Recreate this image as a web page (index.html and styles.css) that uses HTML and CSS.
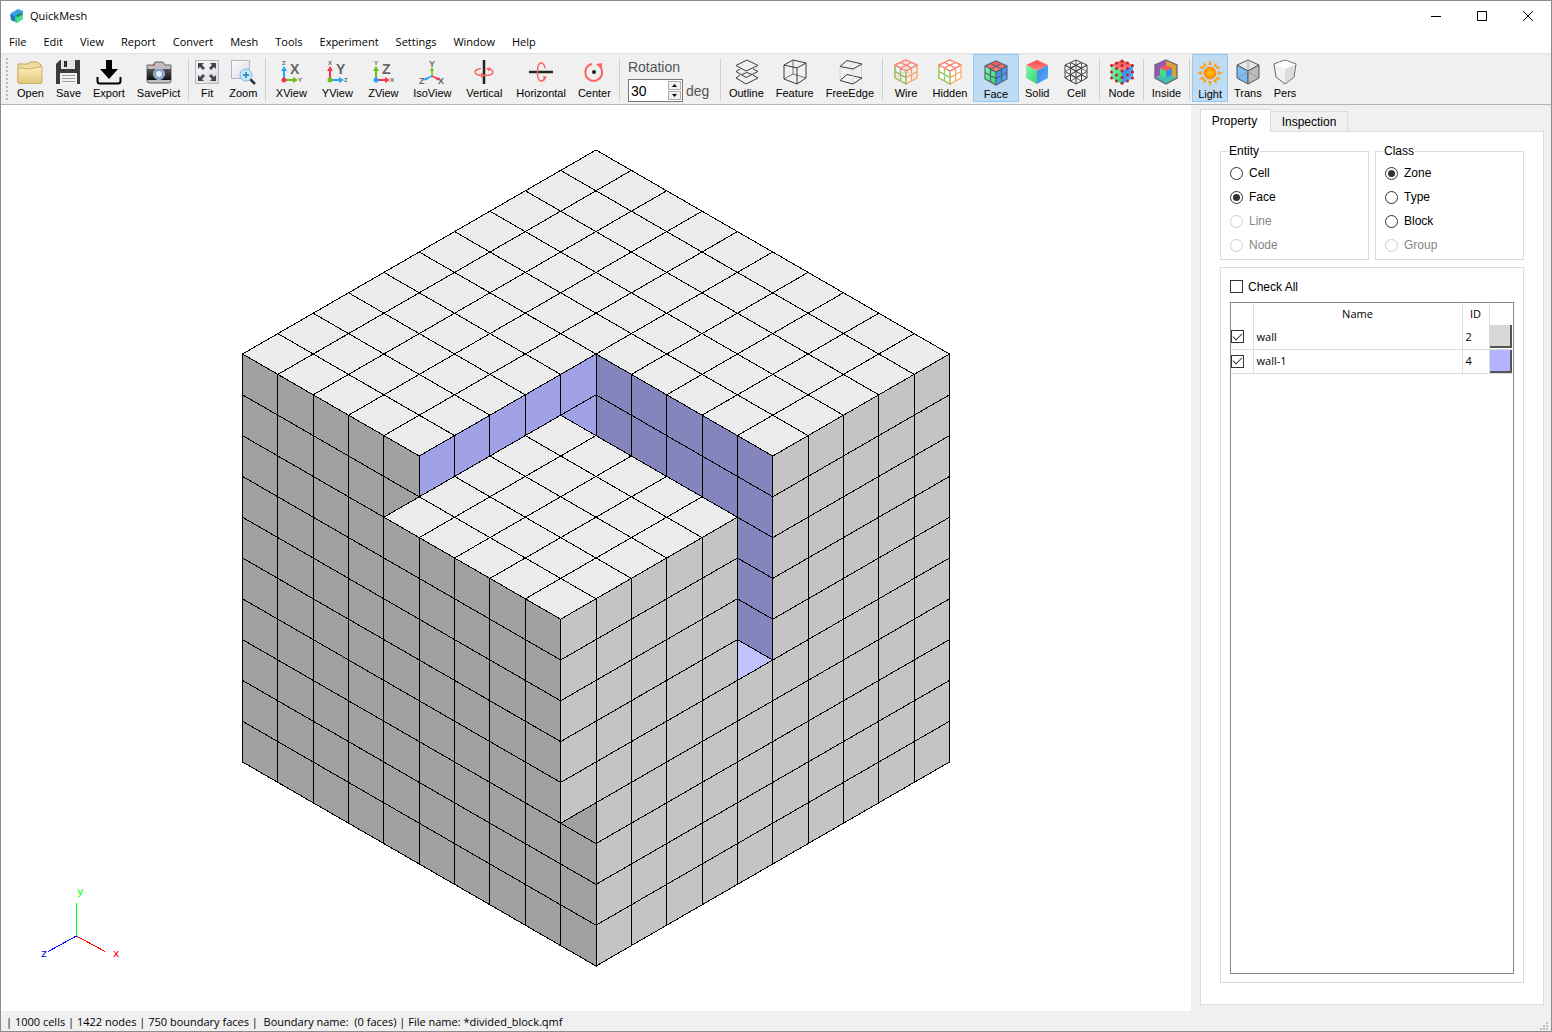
FILE: index.html
```html
<!DOCTYPE html>
<html lang="en">
<head>
<meta charset="utf-8">
<title>QuickMesh</title>
<link rel="stylesheet" href="styles.css">
</head>
<body>
<svg class="defs" width="0" height="0" aria-hidden="true">
  <defs>
    <linearGradient id="folder" x1="0" y1="0" x2="0" y2="1"><stop offset="0" stop-color="#fdf0bd"/><stop offset="1" stop-color="#e3c77c"/></linearGradient>
    <linearGradient id="glass" x1="0" y1="0" x2="1" y2="1"><stop offset="0" stop-color="#fdfdfe"/><stop offset="1" stop-color="#d3d9e4"/></linearGradient>
    <linearGradient id="redtop" x1="0" y1="0" x2="0" y2="1"><stop offset="0" stop-color="#ff4a4a"/><stop offset="1" stop-color="#fb8a85"/></linearGradient>
    <linearGradient id="greenside" x1="0" y1="0" x2="1" y2="1"><stop offset="0" stop-color="#8af5ae"/><stop offset="1" stop-color="#2ed36e"/></linearGradient>
    <linearGradient id="blueside" x1="0" y1="0" x2="1" y2="1"><stop offset="0" stop-color="#2f80e6"/><stop offset="1" stop-color="#62b2ff"/></linearGradient>
    <linearGradient id="lens" x1="0" y1="0" x2="0" y2="1"><stop offset="0" stop-color="#555"/><stop offset="1" stop-color="#111"/></linearGradient>
    <radialGradient id="sun"><stop offset="0" stop-color="#ffc400"/><stop offset="1" stop-color="#ff8a00"/></radialGradient>
    <g id="solidcube">
      <path d="M13 1L24 6 13 12 2 6Z" fill="url(#redtop)"/>
      <path d="M2 6L13 12V25L2 19Z" fill="url(#greenside)"/>
      <path d="M24 6L13 12V25L24 19Z" fill="url(#blueside)"/>
    </g>
    <path id="cubegrid" d="M13 1L24 6V19L13 25 2 19V6ZM2 6L13 12 24 6M13 12V25M7.500 3.500L18.500 9V22M18.500 3.500L7.500 9V22M2 12.500L13 18.500 24 12.500"/>
    <!-- five by five patch of mesh faces in unit coordinates -->
    <path id="patch" d="M0 0H5V5H0ZM1 0V5M2 0V5M3 0V5M4 0V5M0 1H5M0 2H5M0 3H5M0 4H5" vector-effect="non-scaling-stroke"/>
  </defs>
</svg>

<div class="window">
  <header class="titlebar">
    <svg class="logo" viewBox="0 0 16 16"><path d="M2 5L9 1 14 3 14 7 7 9 2 11Z" fill="#3fa0ea"/><path d="M1 6L6 8V14L2 12Z" fill="#2378bd"/><path d="M6 8L14 5V11L8 15 6 14Z" fill="#35d079"/><path d="M6 8L10 5 14 5.500 10 9Z" fill="#258b6e"/><path d="M8 10L14 7V11L8 15Z" fill="#52e392"/></svg>
    <h1>QuickMesh</h1>
    <div class="winbuttons">
      <button aria-label="Minimize"><svg viewBox="0 0 12 12"><path d="M1 6.500H11"/></svg></button>
      <button aria-label="Maximize"><svg viewBox="0 0 12 12"><path d="M1.500 1.500H10.500V10.500H1.500Z"/></svg></button>
      <button aria-label="Close"><svg viewBox="0 0 12 12"><path d="M1 1L11 11M11 1L1 11"/></svg></button>
    </div>
  </header>

  <nav class="menubar">
    <button>File</button><button>Edit</button><button>View</button><button>Report</button><button>Convert</button><button>Mesh</button><button>Tools</button><button>Experiment</button><button>Settings</button><button>Window</button><button>Help</button>
  </nav>

  <div class="toolbar" role="toolbar">
    <span class="grip"></span>
    <button class="tool"><svg viewBox="0 0 26 26"><path d="M1 5H11L13 3H20L24 6V23H1Z" fill="#f1dc9c" stroke="#bfa366"/><path d="M1 23V10L4 9 12 10 25 7.500V23Q25 24.500 23 24.500H3Q1 24.500 1 23Z" fill="url(#folder)" stroke="#c9ae6c"/></svg><span>Open</span></button>
    <button class="tool"><svg viewBox="0 0 26 26"><path d="M1 5L5 1H25V25H1Z" fill="#3b3b3b"/><path d="M6 1H20V10H6Z" fill="#e4e4e4"/><path d="M9 2H12V8H9Z" fill="#333"/><path d="M5 14H22V25H5Z" fill="#f2f2f2"/><path d="M7 16.500H20M7 19.500H20M7 22.500H20" stroke="#999"/></svg><span>Save</span></button>
    <button class="tool"><svg viewBox="0 0 26 26"><path d="M10 1H16V10H22L13 20 4 10H10Z" fill="#000"/><path d="M1.500 18V22Q1.500 24.500 4 24.500H22Q24.500 24.500 24.500 22V18" fill="none" stroke="#000" stroke-width="2"/></svg><span>Export</span></button>
    <button class="tool"><svg viewBox="0 0 26 26"><path d="M1 6H7L9 3H17L19 6H25V22Q25 24 23 24H3Q1 24 1 22Z" fill="#bdbdbd" stroke="#666"/><path d="M1 10H25V21H1Z" fill="url(#lens)"/><circle cx="13" cy="15" r="5.500" fill="#7f9fd0" stroke="#bbb"/><circle cx="13" cy="15" r="3" fill="#e1f0ff"/><circle cx="8" cy="6" r="1" fill="#f33"/></svg><span>SavePict</span></button>
    <span class="sep"></span>
    <button class="tool"><svg viewBox="0 0 26 26"><path d="M1.500 1.500H24.500V24.500H1.500Z" fill="url(#glass)" stroke="#b5b5b5"/><path d="M4 4H10L8 6 11 9 9 11 6 8 4 10ZM22 4H16L18 6 15 9 17 11 20 8 22 10ZM4 22H10L8 20 11 17 9 15 6 18 4 16ZM22 22H16L18 20 15 17 17 15 20 18 22 16Z" fill="#444"/></svg><span>Fit</span></button>
    <button class="tool"><svg viewBox="0 0 26 26"><path d="M1.500 1.500H19.500V19.500H1.500Z" fill="url(#glass)" stroke="#b5b5b5"/><path d="M20 20L25 25" stroke="#333" stroke-width="2.500"/><circle cx="16" cy="16" r="6" fill="#c4e6fb" stroke="#7cb9e6"/><path d="M13 16H19M16 13V19" stroke="#3579ad" stroke-width="1.500"/></svg><span>Zoom</span></button>
    <span class="sep"></span>
    <button class="tool axis"><svg viewBox="0 0 26 26"><path d="M6 21V10" stroke="#23a6f5" stroke-width="2"/><path d="M6 7L3 12H9Z" fill="#23a6f5"/><path d="M6 21H16" stroke="#6abf1c" stroke-width="2"/><path d="M20 21L15 18V24Z" fill="#6abf1c"/><circle cx="6" cy="21" r="2.500" fill="#f4364c"/><text x="4" y="6" class="s">Z</text><text x="20" y="23" class="s">Y</text><text x="12" y="15" class="l">X</text></svg><span>XView</span></button>
    <button class="tool axis"><svg viewBox="0 0 26 26"><path d="M6 21V10" stroke="#f4364c" stroke-width="2"/><path d="M6 7L3 12H9Z" fill="#f4364c"/><path d="M6 21H16" stroke="#23a6f5" stroke-width="2"/><path d="M20 21L15 18V24Z" fill="#23a6f5"/><circle cx="6" cy="21" r="2.500" fill="#6abf1c"/><text x="4" y="6" class="s">X</text><text x="20" y="23" class="s">Z</text><text x="12" y="15" class="l">Y</text></svg><span>YView</span></button>
    <button class="tool axis"><svg viewBox="0 0 26 26"><path d="M6 21V10" stroke="#6abf1c" stroke-width="2"/><path d="M6 7L3 12H9Z" fill="#6abf1c"/><path d="M6 21H16" stroke="#f4364c" stroke-width="2"/><path d="M20 21L15 18V24Z" fill="#f4364c"/><circle cx="6" cy="21" r="2.500" fill="#23a6f5"/><text x="4" y="6" class="s">Y</text><text x="20" y="23" class="s">X</text><text x="12" y="15" class="l">Z</text></svg><span>ZView</span></button>
    <button class="tool axis w52"><svg viewBox="0 0 26 26"><path d="M13 17V10" stroke="#6abf1c" stroke-width="1.500"/><path d="M13 8L11 12H15Z" fill="#6abf1c"/><path d="M13 17L7 20" stroke="#23a6f5" stroke-width="1.500"/><path d="M4 21.500L7 18 9 21Z" fill="#23a6f5"/><path d="M13 17L19 20" stroke="#f4364c" stroke-width="1.500"/><path d="M22 21.500L19 18 17 21Z" fill="#f4364c"/><text x="10" y="8" class="m">Y</text><text x="0" y="25" class="m">Z</text><text x="19" y="25" class="m">X</text></svg><span>IsoView</span></button>
    <button class="tool w52"><svg viewBox="0 0 26 26"><path d="M13 1V25" stroke="#222" stroke-width="2.500"/><path d="M10 9.500Q4 10.500 4 13Q4 16.500 13 16.500Q22 16.500 22 13Q22 11 17 9.500" fill="none" stroke="#fa6464" stroke-width="1.500"/><path d="M15 9L20 8.500 18 12.500ZM10 13.500L14 16.500 10 19Z" fill="#fa6464"/></svg><span>Vertical</span></button>
    <button class="tool"><svg viewBox="0 0 26 26"><path d="M1 13H25" stroke="#222" stroke-width="2.500"/><path d="M17 9Q16 4 13 4Q9.500 4 9.500 13Q9.500 22 13 22Q16 22 17 18" fill="none" stroke="#fa6464" stroke-width="1.500"/><path d="M15 17L19 17.500 16 22Z" fill="#fa6464"/></svg><span>Horizontal</span></button>
    <button class="tool"><svg viewBox="0 0 26 26"><circle cx="13" cy="13" r="2" fill="#222"/><path d="M11 5A8.500 8.500 0 1 0 20 9" fill="none" stroke="#fa6464" stroke-width="2"/><path d="M15 5L21 4 21 11Z" fill="#fa6464"/></svg><span>Center</span></button>
    <span class="sep"></span>
    <div class="rotation">
      <label for="angle">Rotation</label>
      <div class="angle">
        <div class="spin"><input id="angle" type="text" value="30"><div class="arrows"><button aria-label="Increase"><svg viewBox="0 0 7 4"><path d="M3.500 0L7 4H0Z"/></svg></button><button aria-label="Decrease"><svg viewBox="0 0 7 4"><path d="M0 0H7L3.500 4Z"/></svg></button></div></div>
        <span>deg</span>
      </div>
    </div>
    <span class="sep"></span>
    <button class="tool"><svg viewBox="0 0 26 26" fill="none" stroke="#3c3c3c"><path d="M14 1L25 6.500 13 12 3 6.500ZM7 10L3 12.500 13 18.500 25 12.500 20 10M7 16L3 19 13 25 25 19 20 16M9 15.500L14 13.500 19 15.500"/></svg><span>Outline</span></button>
    <button class="tool"><svg viewBox="0 0 26 26" fill="none" stroke="#3c3c3c"><path d="M11 1L24 4V19L15 25 2 20V6ZM2 6L15 9 24 4M15 9V25"/><path d="M11 1V15L2 20M11 15L24 19" stroke-width="0.700"/></svg><span>Feature</span></button>
    <button class="tool"><svg viewBox="0 0 26 26" fill="none" stroke="#3c3c3c"><path d="M10 1.500L25 5 16 10 3 7.500ZM10 15.500L25 19 16 25 3 21.500Z"/><path d="M24.500 6V18M3 8V21M16 11V24" stroke="#d4d4d4"/></svg><span>FreeEdge</span></button>
    <span class="sep"></span>
    <button class="tool w42"><svg viewBox="0 0 26 26" fill="none"><use href="#cubegrid" stroke="#f5a05c" stroke-width="1.200"/><path d="M2 6V19L13 25V12M7.500 9V22M2 12.500L13 18.500" stroke="#8bc66a" stroke-width="1.200"/><path d="M2 6L13 1 24 6 13 12ZM7.500 3.500L18.500 9M18.500 3.500L7.500 9" stroke="#fa7f7f" stroke-width="1.200"/><path d="M13 1V12M2 19L13 12 24 19" stroke="#e9b394" stroke-width="0.700"/></svg><span>Wire</span></button>
    <button class="tool w46"><svg viewBox="0 0 26 26" fill="none"><path d="M13 1L24 6V19L13 25 2 19V6Z" fill="#fff"/><use href="#cubegrid" stroke="#f8a75c" stroke-width="1.200"/><path d="M2 6V19L13 25V12M7.500 9V22M2 12.500L13 18.500" stroke="#8bd066" stroke-width="1.200"/><path d="M2 6L13 1 24 6 13 12ZM7.500 3.500L18.500 9M18.500 3.500L7.500 9" stroke="#fa7f7f" stroke-width="1.200"/></svg><span>Hidden</span></button>
    <button class="tool w46 on"><svg viewBox="0 0 26 26" fill="none"><use href="#solidcube"/><use href="#cubegrid" stroke="#566573" stroke-width="1.200"/></svg><span>Face</span></button>
    <button class="tool"><svg viewBox="0 0 26 26"><use href="#solidcube"/></svg><span>Solid</span></button>
    <button class="tool w42"><svg viewBox="0 0 26 26" fill="none" stroke="#444"><use href="#cubegrid"/><path d="M13 1V12M2 19L13 12 24 19M7.500 3.500V16L18.500 22M18.500 3.500V16L7.500 22M2 12.500L13 6.500 24 12.500M7.500 9L13 6.500M2 6L24 19M24 6L2 19" stroke-width="0.800"/></svg><span>Cell</span></button>
    <span class="sep"></span>
    <button class="tool"><svg viewBox="0 0 26 26"><use href="#solidcube"/><g fill="#b7262b"><circle cx="13" cy="2" r="1.500"/><circle cx="7.500" cy="4" r="1.500"/><circle cx="18.500" cy="4" r="1.500"/><circle cx="2.500" cy="6.500" r="1.500"/><circle cx="13" cy="6.500" r="1.500"/><circle cx="23.500" cy="6.500" r="1.500"/><circle cx="7.500" cy="9.500" r="1.500"/><circle cx="18.500" cy="9.500" r="1.500"/><circle cx="13" cy="12" r="1.500"/><circle cx="2.500" cy="13" r="1.500"/><circle cx="23.500" cy="13" r="1.500"/><circle cx="7.500" cy="16" r="1.500"/><circle cx="18.500" cy="16" r="1.500"/><circle cx="13" cy="18.500" r="1.500"/><circle cx="2.500" cy="19" r="1.500"/><circle cx="23.500" cy="19" r="1.500"/><circle cx="7.500" cy="22" r="1.500"/><circle cx="18.500" cy="22" r="1.500"/><circle cx="13" cy="24.300" r="1.500"/></g></svg><span>Node</span></button>
    <span class="sep"></span>
    <button class="tool"><svg viewBox="0 0 26 26"><path d="M2 6L13 1V13L2 19Z" fill="#9a55b5"/><path d="M13 1L24 6V19L13 13Z" fill="#d9a52c"/><path d="M2 19L13 13 24 19 13 25Z" fill="#47bba8"/><path d="M13 1L24 6V19L13 25 2 19V6Z" fill="none" stroke="#6b6578" stroke-width="1.300"/><path d="M13 6L19 9 13 12 7 9Z" fill="#fb5757"/><path d="M7 9L13 12V19L7 16Z" fill="#41e083"/><path d="M19 9L13 12V19L19 16Z" fill="#388bed"/></svg><span>Inside</span></button>
    <span class="sep"></span>
    <button class="tool on"><svg viewBox="0 0 26 26"><path d="M13 0L15 5H11ZM13 26L15 21H11ZM0 13L5 11V15ZM26 13L21 11V15ZM6.500 2L10 6 6.500 8ZM19.500 2L19.500 8 16 6ZM2 6.500L8 6.500 6 10ZM24 6.500L20 10 18 6.500ZM2 19.500L6 16 8 19.500ZM24 19.500L18 19.500 20 16ZM6.500 24L6.500 18 10 20ZM19.500 24L16 20 19.500 18Z" fill="#ff9d13"/><circle cx="13" cy="13" r="8" fill="#c0dcf3"/><circle cx="13" cy="13" r="6" fill="url(#sun)" stroke="#ff8b08"/></svg><span>Light</span></button>
    <button class="tool"><svg viewBox="0 0 26 26" stroke="#555"><path d="M2 6L13 1 24 6 13 12Z" fill="#e6e6e6"/><path d="M2 6L13 12V25L2 19Z" fill="#7cbdf5"/><path d="M24 6L13 12V25L24 19Z" fill="#bcbcbc"/><path d="M13 1V13L2 19M13 13L24 19" stroke="#8c8c8c" stroke-width="0.700" fill="none"/></svg><span>Trans</span></button>
    <button class="tool"><svg viewBox="0 0 26 26"><path d="M13 1L24 5 22 18 13 25 4 18 2 5Z" fill="#f2f2f2" stroke="#666"/><path d="M2.500 5.500L13 10 23.500 5.500 13 1.500Z" fill="#fff"/><path d="M13 10L23 6 21.500 17.500 13 24Z" fill="#dcdcdc"/></svg><span>Pers</span></button>
  </div>

  <main class="work">
    <section class="view" aria-label="Mesh view">
      <svg class="mesh" viewBox="-595 -453 1190 906" stroke="#000" stroke-width="1" shape-rendering="crispEdges">
        <!-- outer block -->
        <g fill="#ececec" transform="matrix(35.350 20.400 -35.350 20.400 0 -408)"><use href="#patch"/><use href="#patch" x="5"/><use href="#patch" y="5"/></g>
        <g fill="#a1a1a1" transform="matrix(35.350 20.400 0 40.800 -353.500 -204)"><use href="#patch"/><use href="#patch" y="5"/><use href="#patch" x="5" y="5"/></g>
        <g fill="#c4c4c4" transform="matrix(-35.350 20.400 0 40.800 353.500 -204)"><use href="#patch"/><use href="#patch" y="5"/><use href="#patch" x="5" y="5"/></g>
        <!-- pocket left by the divided block -->
        <g fill="#c1c1ff" transform="matrix(35.350 20.400 -35.350 20.400 0 0)"><use href="#patch"/></g>
        <g fill="#a1a1e5" transform="matrix(-35.350 20.400 0 40.800 0 -204)"><use href="#patch"/></g>
        <g fill="#8585bd" transform="matrix(35.350 20.400 0 40.800 0 -204)"><use href="#patch"/></g>
        <!-- divided block -->
        <g fill="#ececec" transform="matrix(35.350 20.400 -35.350 20.400 -35.350 -142.800)"><use href="#patch"/></g>
        <g fill="#a1a1a1" transform="matrix(35.350 20.400 0 40.800 -212.100 -40.800)"><use href="#patch"/></g>
        <g fill="#c4c4c4" transform="matrix(-35.350 20.400 0 40.800 141.400 -40.800)"><use href="#patch"/></g>
      </svg>
      <svg class="triad" viewBox="36 880 90 80" shape-rendering="crispEdges">
        <path d="M76.500 936V903" stroke="#0f0"/><path d="M76.500 936L105 951.500" stroke="#f00"/><path d="M76.500 936L48 951.500" stroke="#00f"/>
        <text x="77" y="895" fill="#0f0">y</text><text x="41" y="957" fill="#00f">z</text><text x="113" y="957" fill="#f00">x</text>
      </svg>
    </section>

    <aside class="side">
      <div class="tabs" role="tablist"><button class="tab current" role="tab" aria-selected="true">Property</button><button class="tab" role="tab">Inspection</button></div>
      <div class="pane">
        <div class="groups">
          <fieldset><legend>Entity</legend>
            <label><input type="radio" name="entity">Cell</label>
            <label><input type="radio" name="entity" checked>Face</label>
            <label><input type="radio" name="entity" disabled>Line</label>
            <label><input type="radio" name="entity" disabled>Node</label>
          </fieldset>
          <fieldset><legend>Class</legend>
            <label><input type="radio" name="class" checked>Zone</label>
            <label><input type="radio" name="class">Type</label>
            <label><input type="radio" name="class">Block</label>
            <label><input type="radio" name="class" disabled>Group</label>
          </fieldset>
        </div>
        <div class="list">
          <label class="all"><input type="checkbox">Check All</label>
          <div class="tablebox">
            <table>
              <thead><tr><th class="c1"></th><th>Name</th><th class="c3">ID</th><th class="c4"></th></tr></thead>
              <tbody>
                <tr><td><input type="checkbox" aria-label="wall" checked></td><td>wall</td><td>2</td><td><button class="swatch grey" aria-label="Colour of wall"></button></td></tr>
                <tr><td><input type="checkbox" aria-label="wall-1" checked></td><td>wall-1</td><td>4</td><td><button class="swatch blue" aria-label="Colour of wall-1"></button></td></tr>
              </tbody>
            </table>
          </div>
        </div>
      </div>
    </aside>
  </main>

  <footer class="status"><span>| 1000 cells | 1422 nodes | 750 boundary faces |&nbsp; Boundary name:&nbsp; (0 faces) | File name: *divided_block.qmf</span>
    <svg viewBox="0 0 8 8"><path d="M6 0H8V2H6ZM3 3H5V5H3ZM6 3H8V5H6ZM0 6H2V8H0ZM3 6H5V8H3ZM6 6H8V8H6Z"/></svg></footer>
</div>
</body>
</html>
```
FILE: styles.css
```css
* { box-sizing: border-box; }
body { margin: 0; font: 12px/16px "Liberation Sans", Arial, sans-serif; color: #000; }
button { margin: 0; padding: 0; border: 0; background: none; font: inherit; color: inherit; }
svg { display: block; }
.defs { position: absolute; }

.window { display: flex; flex-direction: column; height: 100vh; border: 1px solid #8c8c8c; background: #f0f0f0; }

.titlebar { display: flex; align-items: center; height: 29px; padding-left: 8px; background: #fff; font-family: "Open Sans", "Noto Sans", sans-serif; }
.titlebar h1 { margin: 0; font-size: 11px; font-weight: 400; }
.logo { width: 16px; height: 16px; margin-right: 5px; }
.winbuttons { display: flex; margin-left: auto; }
.winbuttons button { display: grid; place-items: center; width: 46px; height: 29px; }
.winbuttons svg { width: 12px; height: 12px; fill: none; stroke: #000; }

.menubar { display: flex; gap: 1px; height: 23px; background: #fff; font-family: "Open Sans", "Noto Sans", sans-serif; font-size: 11px; }
.menubar button { padding: 0 8px; }

.toolbar { display: flex; align-items: flex-start; height: 52px; padding: 0 0 0 5px; border-top: 1px solid #e0e0e0; border-bottom: 1px solid #b4b4b4; }
.grip { width: 2px; height: 42px; margin: 4px 3px 0 0; background: repeating-linear-gradient(#b8b8b8 0 2px, transparent 2px 4px); }
.tool { flex: none; display: flex; flex-direction: column; align-items: center; min-width: 32px; height: 48px; padding: 4px 5px 0; border: 1px solid transparent; font-size: 11px; line-height: 16px; }
.tool svg { width: 26px; height: 26px; margin: 0 -5px; overflow: visible; }
.tool.on { padding-top: 5px; background: #c0dcf3; border-color: #90c8f6; }
.axis, .w46 { width: 46px; }
.w42 { width: 42px; }
.w52 { width: 52px; }
.axis text { fill: #666; font-weight: 700; }
.axis .s { font-size: 6px; }
.axis .m { font-size: 9px; }
.axis .l { font-size: 14px; }
.sep { flex: none; width: 1px; height: 43px; margin: 4px 2px 0; background: #cfcfcf; }
.rotation { flex: none; margin: 3px 4px 0 6px; width: 86px; font-size: 14px; color: #555; }
.rotation label { display: block; height: 22px; line-height: 20px; }
.angle { display: flex; align-items: center; gap: 3px; }
.spin { display: flex; width: 55px; height: 23px; border: 1px solid #777; background: #fff; }
.spin input { flex: 1; min-width: 0; padding: 0 2px; border: 0; background: none; font: inherit; color: #000; }
.arrows { display: flex; flex-direction: column; gap: 1px; width: 15px; padding: 1px; }
.arrows button { flex: 1; display: grid; place-items: center; border: 1px solid #aaa; background: #f0f0f0; }
.arrows svg { width: 5px; height: 3px; }

.work { flex: 1; display: flex; min-height: 0; }
.view { position: relative; flex: 1; min-width: 0; background: #fff; }
.mesh { width: 100%; height: 100%; }
.triad { position: absolute; left: 35px; bottom: 51px; width: 90px; height: 80px; }
.triad text { font: 11px "DejaVu Sans", sans-serif; }

.side { flex: none; display: flex; flex-direction: column; width: 360px; padding: 4px 7px 6px 9px; }
.tabs { display: flex; align-items: flex-end; height: 23px; margin-bottom: -1px; }
.tab { width: 77px; height: 21px; border: 1px solid #dcdcdc; border-left: 0; }
.tab.current { position: relative; width: 71px; height: 23px; padding-right: 2px; border-left: 1px solid #dcdcdc; border-bottom: 0; background: #fff; }
.pane { flex: 1; display: flex; flex-direction: column; min-height: 0; padding: 11px 19px 21px; border: 1px solid #dcdcdc; background: #fff; }
.groups { display: grid; grid-template-columns: 1fr 1fr; gap: 6px; }
fieldset { min-width: 0; margin: 0; padding: 2px 9px; border: 1px solid #dcdcdc; }
legend { margin-left: -2px; padding: 0 1px; }
label { display: flex; align-items: center; }
fieldset label { height: 24px; gap: 6px; }
label:has(:disabled) { color: #868686; }
input[type="radio"], input[type="checkbox"] { appearance: none; flex: none; display: grid; place-items: center; width: 13px; height: 13px; margin: 0; border: 1px solid #333; background: #fff; }
input[type="radio"] { border-radius: 50%; }
input[type="radio"]:checked::before { content: ""; width: 7px; height: 7px; border-radius: 50%; background: #333; }
input[type="radio"]:disabled { border-color: #ccc; }
input[type="checkbox"]:checked::before { content: ""; width: 8px; height: 4px; margin-top: -3px; border: solid #333; border-width: 0 0 1px 1px; rotate: -45deg; }
.list { flex: 1; display: flex; flex-direction: column; margin-top: 7px; padding: 10px 9px 8px; border: 1px solid #dcdcdc; }
.all { gap: 5px; height: 17px; margin-bottom: 7px; }
.tablebox { flex: 1; border: 1px solid #828790; }
table { width: 100%; table-layout: fixed; border-collapse: collapse; font-family: "Open Sans", "Noto Sans", sans-serif; font-size: 11px; }
th, td { height: 24px; padding: 0 3px; border-right: 1px solid #dcdcdc; font-weight: 400; text-align: left; }
th { height: 22px; text-align: center; }
td { border-bottom: 1px solid #dcdcdc; }
th:last-child, td:last-child { border-right: 0; padding: 0; }
td:first-child { padding: 0; }
.c1 { width: 22px; }
.c3 { width: 27px; }
.c4 { width: 24px; }
.swatch { display: block; width: 22px; height: 23px; border: solid #555; border-width: 0 2px 2px 0; }
.grey { background: #d8d8d8; }
.blue { background: #b3b3ff; }

.status { display: flex; align-items: center; justify-content: space-between; height: 20px; padding: 1px 3px 0 5px; font-family: "Open Sans", "Noto Sans", sans-serif; font-size: 11px; }
.status svg { width: 8px; height: 8px; margin-top: 8px; fill: #bfbfbf; }
```
